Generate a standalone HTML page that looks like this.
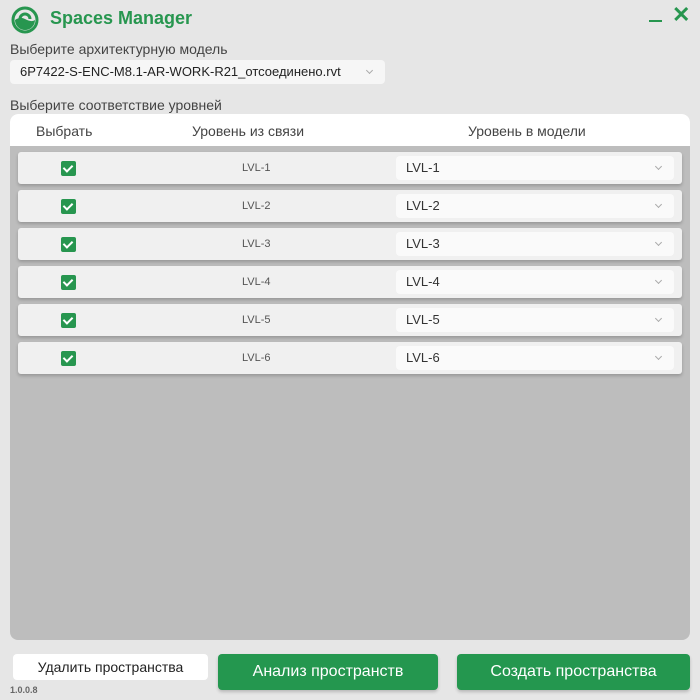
<!DOCTYPE html>
<html><head><meta charset="utf-8"><style>
*{box-sizing:border-box;margin:0;padding:0}
body{width:700px;height:700px;background:#e6e6e6;font-family:"Liberation Sans",sans-serif;position:relative;overflow:hidden;color:#333}
.abs{position:absolute}
.title{left:50px;top:8px;font-size:18px;font-weight:bold;color:#27964f}
.lbl{font-size:14px;color:#444}
.combo{left:10px;top:60px;width:375px;height:24px;background:#f6f6f6;border-radius:4px;font-size:13px;line-height:24px;padding-left:10px;color:#222}
.chev{position:absolute;right:13px;top:8px;width:5px;height:5px;border-right:1px solid #aaa;border-bottom:1px solid #aaa;transform:rotate(45deg)}
.panel{left:10px;top:114px;width:680px;height:526px;background:#bdbdbd;border-radius:8px;overflow:hidden}
.head{position:absolute;left:0;top:0;width:680px;height:32px;background:#fff;font-size:14px;color:#444}
.head span{position:absolute;top:9px}
.row{position:absolute;left:8px;width:664px;height:32px;background:#f0f0f0;border-radius:3px;box-shadow:0 2px 3px rgba(0,0,0,.2)}
.cb{position:absolute;left:43px;top:9px;width:15px;height:15px;background:#27964f;border-radius:2px}
.cb:after{content:"";position:absolute;left:4px;top:2px;width:4px;height:7px;border-right:2px solid #fff;border-bottom:2px solid #fff;transform:rotate(45deg)}
.lv{position:absolute;left:224px;top:10px;font-size:11px;color:#555}
.dd{position:absolute;left:378px;top:4px;width:278px;height:24px;background:#fafafa;border-radius:4px;font-size:13px;line-height:24px;padding-left:10px;color:#333}
.btn{border-radius:4px;font-size:16px;text-align:center;color:#fff;background:#24974f;box-shadow:0 2px 3px rgba(0,0,0,.2)}
</style></head><body>
<svg class="abs" style="left:10px;top:6px" width="30" height="28" viewBox="0 0 30 28">
<circle cx="15" cy="14" r="12" fill="none" stroke="#27964f" stroke-width="3"/>
<path d="M5 14a10 10 0 0 0 20 0c-3 2-6 1-10-1s-7-1-10 1z" fill="#27964f"/>
<path d="M10 13a5 5 0 0 1 10 0" fill="none" stroke="#27964f" stroke-width="3"/>
</svg>
<div class="abs title">Spaces Manager</div>
<div class="abs" style="left:649px;top:20px;width:13px;height:2px;background:#27964f"></div>
<div class="abs" style="left:672px;top:2px;font-size:22px;color:#27964f;font-weight:bold">✕</div>
<div class="abs lbl" style="left:10px;top:41px">Выберите архитектурную модель</div>
<div class="abs combo">6P7422-S-ENC-M8.1-AR-WORK-R21_отсоединено.rvt<div class="chev"></div></div>
<div class="abs lbl" style="left:10px;top:97px">Выберите соответствие уровней</div>
<div class="abs panel">
<div class="head"><span style="left:26px">Выбрать</span><span style="left:182px">Уровень из связи</span><span style="left:458px">Уровень в модели</span></div>
<div class="row" style="top:38px"><div class="cb"></div><div class="lv">LVL-1</div><div class="dd">LVL-1<div class="chev"></div></div></div>
<div class="row" style="top:76px"><div class="cb"></div><div class="lv">LVL-2</div><div class="dd">LVL-2<div class="chev"></div></div></div>
<div class="row" style="top:114px"><div class="cb"></div><div class="lv">LVL-3</div><div class="dd">LVL-3<div class="chev"></div></div></div>
<div class="row" style="top:152px"><div class="cb"></div><div class="lv">LVL-4</div><div class="dd">LVL-4<div class="chev"></div></div></div>
<div class="row" style="top:190px"><div class="cb"></div><div class="lv">LVL-5</div><div class="dd">LVL-5<div class="chev"></div></div></div>
<div class="row" style="top:228px"><div class="cb"></div><div class="lv">LVL-6</div><div class="dd">LVL-6<div class="chev"></div></div></div>
</div>
<div class="abs" style="left:13px;top:654px;width:195px;height:26px;background:#fff;border-radius:4px;font-size:14px;line-height:26px;text-align:center;color:#222">Удалить пространства</div>
<div class="abs btn" style="left:218px;top:654px;width:220px;height:36px;line-height:36px">Анализ пространств</div>
<div class="abs btn" style="left:457px;top:654px;width:233px;height:36px;line-height:36px">Создать пространства</div>
<div class="abs" style="left:10px;top:685px;font-size:9px;color:#666;font-weight:bold">1.0.0.8</div>
</body></html>
